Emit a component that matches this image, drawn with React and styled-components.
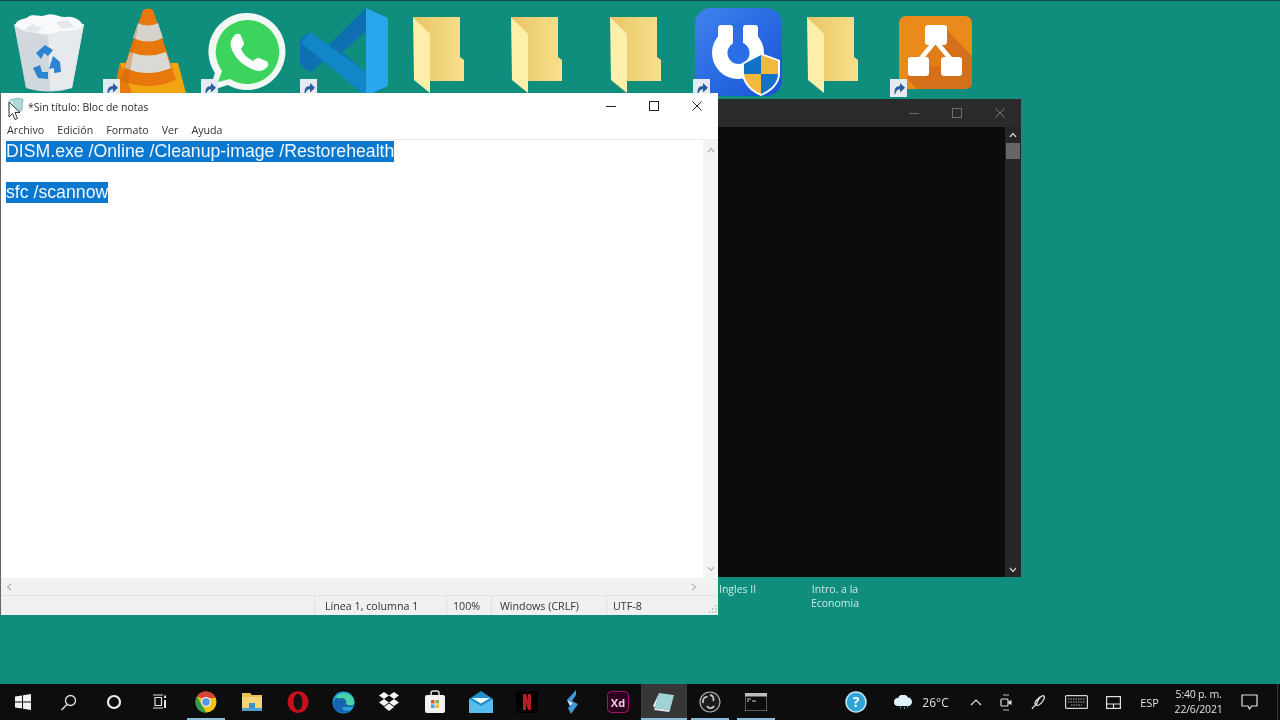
import React from 'react';
import styled, { createGlobalStyle } from 'styled-components';

const GlobalStyle = createGlobalStyle`
  html, body { margin: 0; padding: 0; background: #0f8e7e; }
  body { width: 1280px; height: 720px; overflow: hidden; font-family: "Open Sans", "Noto Sans", sans-serif; }
  #root { filter: blur(0.35px); }
`;

const Screen = styled.div`
  width: 1280px;
  height: 720px;
  display: flex;
  flex-direction: column;
  background: #0f8e7e;
  border-top: 1px solid #0d4a44;
  box-sizing: border-box;
`;

const Desktop = styled.div`
  position: relative;
  flex: 1;
  overflow: hidden;
`;

const IconRow = styled.div`
  display: flex;
  align-items: flex-start;
`;

const DeskIcon = styled.div`
  position: relative;
  flex: none;
  width: ${(p) => p.$w}px;
  height: ${(p) => p.$h}px;
  margin-left: ${(p) => p.$gap}px;
  margin-top: ${(p) => p.$top}px;
  svg { display: block; }
`;

const ShortcutBadge = styled.div`
  position: absolute;
  left: ${(p) => p.$x}px;
  top: ${(p) => p.$y}px;
  width: 17px;
  height: 18px;
  background: #e4ebf0;
  display: flex;
  align-items: center;
  justify-content: center;
`;

const DeskLabel = styled.div`
  position: absolute;
  left: ${(p) => p.$x}px;
  top: 581px;
  width: ${(p) => p.$w}px;
  color: #cfe9e5;
  font-size: 10.5px;
  line-height: 14px;
  text-align: ${(p) => p.$align};
`;

const ConsoleWindow = styled.div`
  position: absolute;
  left: 700px;
  top: 98px;
  width: 321px;
  height: 478px;
  display: flex;
  flex-direction: column;
  background: #0c0c0c;
`;

const ConsoleTitle = styled.div`
  height: 28px;
  flex: none;
  background: #2b2b2b;
  display: flex;
  justify-content: flex-end;
  align-items: center;
`;

const ConsoleBody = styled.div`
  flex: 1;
  display: flex;
  justify-content: flex-end;
`;

const ConsoleScroll = styled.div`
  width: 16px;
  background: #262626;
  display: flex;
  flex-direction: column;
  align-items: center;
  justify-content: space-between;
  padding: 4px 0 3px;
  box-sizing: border-box;
  position: relative;
`;

const ConsoleThumb = styled.div`
  position: absolute;
  top: 16px;
  left: 1px;
  width: 14px;
  height: 16px;
  background: #666;
`;

const WinButton = styled.div`
  width: 43px;
  flex: none;
  height: 100%;
  display: flex;
  align-items: center;
  justify-content: center;
`;

const Notepad = styled.div`
  position: absolute;
  left: 0;
  top: 92px;
  width: 718px;
  height: 522px;
  display: flex;
  flex-direction: column;
  background: #fff;
  border-left: 1px solid #666;
  box-sizing: border-box;
  color: #222;
`;

const TitleBar = styled.div`
  height: 25px;
  flex: none;
  display: flex;
  align-items: center;
  padding-left: 6px;
  font-size: 10.5px;
`;

const TitleText = styled.span`
  flex: 1;
  margin: 2px 0 0 4px;
  color: #2a2a2a;
`;

const MenuBar = styled.div`
  height: 22px;
  flex: none;
  display: flex;
  align-items: center;
  gap: 13px;
  padding: 2px 0 0 6px;
  box-sizing: border-box;
  font-size: 10.7px;
  color: #333;
  border-bottom: 1px solid #eee;
`;

const EditorRow = styled.div`
  flex: 1;
  display: flex;
  min-height: 0;
`;

const Editor = styled.div`
  flex: 1;
  padding: 1px 0 0 5px;
  font-family: "Liberation Sans", Arial, sans-serif;
  font-size: 17.7px;
  line-height: 20.6px;
  color: #f2f8fd;
`;

const Line = styled.div`
  height: 20.6px;
`;

const Selected = styled.span`
  background: #0b78cf;
  display: inline-block;
  height: 20.6px;
`;

const VScroll = styled.div`
  width: 15px;
  flex: none;
  background: #f4f4f4;
  display: flex;
  flex-direction: column;
  justify-content: space-between;
  align-items: center;
  padding: 6px 0 5px;
  box-sizing: border-box;
`;

const HScroll = styled.div`
  height: 17px;
  flex: none;
  background: #f1f1f1;
  display: flex;
  justify-content: space-between;
  align-items: center;
  padding: 0 20px 0 4px;
`;

const StatusBar = styled.div`
  position: relative;
  height: 19px;
  flex: none;
  background: #f0f0f0;
  border-top: 1px solid #e2e2e2;
  display: flex;
  font-size: 10.7px;
  color: #333;
  padding-left: 313px;
`;

const StatusCell = styled.div`
  width: ${(p) => p.$w}px;
  padding-left: ${(p) => p.$pad}px;
  box-sizing: border-box;
  border-left: 1px solid #e0e0e0;
  display: flex;
  align-items: center;
`;

const Grip = styled.svg`
  position: absolute;
  right: 1px;
  bottom: 1px;
`;

const Taskbar = styled.div`
  height: 36px;
  flex: none;
  background: #0d0d0d;
  display: flex;
  align-items: stretch;
  color: #e0e0e0;
`;

const TaskButton = styled.div`
  position: relative;
  width: 45.8px;
  flex: none;
  display: flex;
  align-items: center;
  justify-content: center;
  background: ${(p) => (p.$active ? '#363636' : 'transparent')};
  &::after {
    content: '';
    display: ${(p) => (p.$open ? 'block' : 'none')};
    position: absolute;
    left: 4px;
    right: 4px;
    bottom: 0;
    height: 2px;
    background: #8cbcd8;
  }
  ${(p) => p.$active && '&::after { left: 0; right: 0; }'}
`;

const Tray = styled.div`
  flex: 1;
  display: flex;
  align-items: center;
  position: relative;
  font-size: 11px;
  border-right: 1px solid #3a3a3a;
  margin-right: 2px;
`;

const TraySlot = styled.div`
  flex: none;
  width: ${(p) => p.$w}px;
  margin-left: ${(p) => p.$gap || 0}px;
  display: flex;
  align-items: center;
  justify-content: center;
  font-size: ${(p) => p.$size || 11}px;
`;

const Clock = styled.div`
  flex: none;
  width: 60px;
  margin-left: 8px;
  text-align: center;
  font-size: 10.5px;
  line-height: 15px;
  letter-spacing: -0.2px;
`;

const Badge = () => (
  <svg width="14" height="15" viewBox="0 0 14 15">
    <path d="M3 14C1.500 8 4 5 8 5V2l5 4.800L8 11.500V8C5.500 8 4 10 3 14Z" fill="#2c5c9e" />
  </svg>
);

const RecycleBin = () => (
  <svg width="70" height="80" viewBox="0 0 70 80">
    <path d="M0 12L70 12 58 76Q36 83 12 76Z" fill="#d9dfe3" />
    <path d="M34 18L70 12 58 76 36 79Z" fill="#e6eaed" />
    <path d="M1 13C4 6 10 8 14 5 20 1 26 6 32 3 40 0 46 6 52 5 60 4 66 8 69 13 62 22 48 17 40 21 30 25 22 19 14 20 8 20 4 17 1 13Z" fill="#f8f9fa" />
    <path d="M10 18L18 12 28 16 22 22Z" fill="#e3e7ea" />
    <path d="M42 10L54 8 60 15 48 17Z" fill="#e3e7ea" />
    <path d="M1 14L14 20 34 24 36 79 12 76Z" fill="#c9d2d8" opacity=".55" />
    <g fill="#2a84d2">
      <path d="M22 41L31 33 39 38 34 44 30 41 27 47Z" />
      <path d="M39 44L46 50 47 60 40 61 40 56 35 57Z" />
      <path d="M34 67L24 66 19 56 26 53 28 60 34 60Z" />
    </g>
  </svg>
);

const VlcCone = () => (
  <svg width="76" height="85" viewBox="0 0 76 85">
    <path d="M10 55L4 85H76L68 55Z" fill="#f2a411" />
    <path d="M10 55L4 85H22L14 64Z" fill="#e67c0e" />
    <path d="M33 2Q38 -1 43 2L66 72Q38 84 10 72Z" fill="#e8780c" />
    <path d="M28 15Q38 20 48 15L53 30Q38 37 23 30Z" fill="#d6d3cd" />
    <path d="M20 44Q38 51 56 44L61 60Q38 70 15 60Z" fill="#dbd9d4" />
    <path d="M30 6L26 22 20 44 16 60 10 72Q14 74 18 76Z" fill="#c9620a" opacity=".35" />
  </svg>
);

const Whatsapp = () => (
  <svg width="80" height="80" viewBox="0 0 80 80">
    <path d="M40 1a38.500 38.500 0 1 1-19 72L2 79l6-18A38.500 38.500 0 0 1 40 1Z" fill="#f3f7f3" />
    <path d="M40 8a32 32 0 1 1-17 59L11 70l4-11A32 32 0 0 1 40 8Z" fill="#3dd45e" />
    <path d="M27 24c2-3 6-3 7 0l3 7c.5 2-2 4-3 6 2 5 6 9 12 12 2-1 4-4 6-3l7 3c3 1 3 5 0 7-5 5-12 3-20-2-8-5-13-12-15-19-1-4 0-8 3-11Z" fill="#fff" />
  </svg>
);

const VsCode = () => (
  <svg width="90" height="88" viewBox="0 0 90 88">
    <path d="M66 0L88 10V78L66 88 28 50 10 64 0 57V31L10 24 28 38Z M66 24L42 44 66 64Z" fill="#0e70b0" fillRule="evenodd" />
    <path d="M10 24L66 64V88L1 35Z" fill="#1187ca" />
    <path d="M66 0L88 10V78L66 88Z" fill="#29a6ec" />
  </svg>
);

const Folder = () => (
  <svg width="53" height="76" viewBox="0 0 53 76">
    <defs>
      <linearGradient id="fold" x1="0" x2="1" y1="0" y2="0">
        <stop offset="0" stopColor="#e8c563" />
        <stop offset="1" stopColor="#f9e08c" />
      </linearGradient>
    </defs>
    <path d="M0 0H47V40L51 43V64H16V18Z" fill="url(#fold)" />
    <path d="M0 0L17 17V76L1 63Z" fill="#fdeeaa" />
  </svg>
);

const ShieldApp = () => (
  <svg width="88" height="88" viewBox="0 0 88 88">
    <defs>
      <linearGradient id="blueApp" x1="0" y1="0" x2="1" y2="1">
        <stop offset="0" stopColor="#3f82ee" />
        <stop offset="1" stopColor="#1554d6" />
      </linearGradient>
    </defs>
    <rect x="0" y="0" width="87" height="88" rx="16" fill="url(#blueApp)" />
    <circle cx="43" cy="45" r="26" fill="#fff" />
    <path d="M23 20Q23 17 26 17H35Q38 17 38 20V34H23Z" fill="#fff" />
    <path d="M48 20Q48 17 51 17H60Q63 17 63 20V34H48Z" fill="#fff" />
    <path d="M38 15H48V38H38Z" fill="#2c6ee6" />
    <path d="M23 15H38V24H23Z" fill="none" />
    <circle cx="43.500" cy="45" r="11" fill="#2c6ee6" />
    <path d="M47 55L66 45 85 52V66C85 76 76 84 66 88 56 84 48 76 47 66Z" fill="#fff" />
    <path d="M49 56L66 47V66H49Z" fill="#1272c6" />
    <path d="M66 47L83 53V66H66Z" fill="#f3b93f" />
    <path d="M49 66H66V86C57 82 50 75 49 66Z" fill="#f3b93f" />
    <path d="M66 66H83C83 75 75 82 66 86Z" fill="#1272c6" />
  </svg>
);

const DrawioApp = () => (
  <svg width="73" height="73" viewBox="0 0 73 73">
    <rect width="73" height="73" rx="7" fill="#e98a1b" />
    <path d="M48 14L73 40V66Q73 73 66 73H18L8 62 30 30Z" fill="#d4701a" />
    <path d="M37 20L15 50H58Z" fill="#e98a1b" opacity=".5" />
    <path d="M34 28L18 47M39 28L55 47" stroke="#fff" strokeWidth="4.500" />
    <rect x="26" y="9" width="22" height="20" rx="3" fill="#fff" />
    <rect x="9" y="41" width="21" height="19" rx="3" fill="#fff" />
    <rect x="42" y="41" width="21" height="19" rx="3" fill="#fff" />
  </svg>
);

const NotepadIcon = () => (
  <svg width="17" height="17" viewBox="0 0 16 16">
    <path d="M2 3L10 1 15 2 14 13 6 15 2 13Z" fill="#a9d9dc" stroke="#7a9aa0" strokeWidth=".6" />
    <path d="M2 3L6 5V15L2 13Z" fill="#d7eef0" />
  </svg>
);

const Pointer = styled.svg`
  position: absolute;
  left: 7px;
  top: 8px;
`;

const MinGlyph = ({ c, w = 1 }) => (
  <svg width="12" height="12" viewBox="0 0 12 12"><path d="M1 6.500H11" stroke={c} strokeWidth={w} /></svg>
);
const MaxGlyph = ({ c }) => (
  <svg width="12" height="12" viewBox="0 0 12 12"><rect x="1.500" y="1.500" width="9" height="9" fill="none" stroke={c} strokeWidth="1" /></svg>
);
const CloseGlyph = ({ c }) => (
  <svg width="12" height="12" viewBox="0 0 12 12"><path d="M1.500 1.500L10.500 10.500M10.500 1.500L1.500 10.500" stroke={c} strokeWidth="1" /></svg>
);
const Arrow = ({ d, c = '#b5b5b5' }) => (
  <svg width="8" height="8" viewBox="0 0 8 8"><path d={d} fill="none" stroke={c} strokeWidth="1.200" /></svg>
);

const TASK_ICONS = [
  { key: 'win', el: <svg width="16" height="16" viewBox="0 0 16 16"><path d="M0 2.500L7 1.500V7.500H0ZM8 1.300L16 0V7.500H8ZM0 8.500H7V14.500L0 13.500ZM8 8.500H16V16L8 14.700Z" fill="#f2f2f2" /></svg> },
  { key: 'search', el: <svg width="17" height="17" viewBox="0 0 17 17"><circle cx="10.500" cy="6.500" r="5" fill="none" stroke="#e0e0e0" strokeWidth="1.300" /><path d="M7 10.500L1.500 16" stroke="#e0e0e0" strokeWidth="1.400" /></svg> },
  { key: 'cortana', el: <svg width="16" height="16" viewBox="0 0 16 16"><circle cx="8" cy="8" r="6" fill="none" stroke="#eee" strokeWidth="2.200" /></svg> },
  { key: 'view', el: <svg width="16" height="16" viewBox="0 0 16 16"><path d="M3 3.500H9.500V11.500H3ZM1 1H11M1 14H11" fill="none" stroke="#e0e0e0" strokeWidth="1.200" /><path d="M13 1.500V4M13 6V14" stroke="#e0e0e0" strokeWidth="2" /></svg> },
  { key: 'chrome', open: true, el: <svg width="22" height="22" viewBox="0 0 22 22"><circle cx="11" cy="11" r="10.500" fill="#f0c419" /><path d="M11 .5A10.500 10.500 0 0 1 20.500 7H11Z M2 5.500A10.500 10.500 0 0 1 11 .5V7H6Z" fill="#d9443a" /><path d="M2 5.500L7 14 11 21.500A10.500 10.500 0 0 1 2 5.500Z" fill="#2f9e4f" /><circle cx="11" cy="11" r="5" fill="#f4f4f4" /><circle cx="11" cy="11" r="3.800" fill="#5a94ea" /></svg> },
  { key: 'explorer', el: <svg width="22" height="20" viewBox="0 0 22 20"><path d="M1 1H9L11 3H21V19H1Z" fill="#e9bf4f" /><path d="M1 5H21V19H1Z" fill="#f4d679" /><path d="M8 11H14V16H8Z" fill="#3a8fc4" /><path d="M1 16H21V19H1Z" fill="#4da0cf" /></svg> },
  { key: 'opera', el: <svg width="22" height="22" viewBox="0 0 22 22"><ellipse cx="11" cy="11" rx="10.500" ry="10.800" fill="#c8101c" /><ellipse cx="11" cy="11" rx="4.500" ry="8.200" fill="#121212" /></svg> },
  { key: 'edge', el: <svg width="23" height="23" viewBox="0 0 23 23"><circle cx="11.500" cy="11.500" r="11" fill="#2aa0d8" /><path d="M1 13C2 5 12 2 18 6c4 3 5 7 4 10H10c0 3 4 5 9 3-2 2-5 3.500-8 3C5 21 0 17 1 13Z" fill="#1565b0" /><path d="M4 6C8 1 17 1 21 7c2 3 1.500 6 0 7-2 1-6 0-7-1 1-3-1-6-4-6-2 0-4 1-6-1Z" fill="#46d4a4" /></svg> },
  { key: 'dropbox', el: <svg width="22" height="20" viewBox="0 0 22 20"><path d="M6 0L11 3.500 6 7 1 3.500ZM16 0L21 3.500 16 7 11 3.500ZM6 7L11 10.500 6 14 1 10.500ZM16 7L21 10.500 16 14 11 10.500ZM6 15L11 11.500 16 15 11 19Z" fill="#f2f2f2" /></svg> },
  { key: 'store', el: <svg width="22" height="24" viewBox="0 0 22 24"><path d="M7 6V3Q7 1 9 1H13Q15 1 15 3V6" fill="none" stroke="#e0e0e0" strokeWidth="1.500" /><rect x="1" y="5" width="20" height="18" rx="2" fill="#f1f1f1" /><rect x="7" y="10" width="3.500" height="3.500" fill="#e2562f" /><rect x="11.500" y="10" width="3.500" height="3.500" fill="#7eba3a" /><rect x="7" y="14.500" width="3.500" height="3.500" fill="#36a4e6" /><rect x="11.500" y="14.500" width="3.500" height="3.500" fill="#f4b62c" /></svg> },
  { key: 'mail', el: <svg width="24" height="22" viewBox="0 0 24 22"><path d="M0 8L12 0 24 8V22H0Z" fill="#1f8fd0" /><path d="M0 8L12 15 24 8V22H0Z" fill="#58bdea" /><path d="M3 7H21L12 12.500Z" fill="#f3f8fb" /></svg> },
  { key: 'netflix', el: <svg width="22" height="22" viewBox="0 0 22 22"><rect width="22" height="22" fill="#000" /><path d="M7 3H10L15 19H12ZM7 3H10V19L7 19ZM12 3H15V19H12Z" fill="#b81d24" /></svg> },
  { key: 'bolt', el: <svg width="14" height="24" viewBox="0 0 14 24"><path d="M11 0L2 10 8 13 3 18 6 24 13 14 7 11 11 5Z" fill="#3d9bdc" /><path d="M2 10L8 13 5 16Z" fill="#d5eefc" /></svg> },
  { key: 'xd', el: <svg width="22" height="22" viewBox="0 0 22 22"><rect x=".5" y=".5" width="21" height="21" rx="4" fill="#2e001f" stroke="#a81570" /><text x="11" y="15.500" textAnchor="middle" fontFamily="Open Sans, sans-serif" fontSize="11" fontWeight="700" fill="#f5c8e8">Xd</text></svg> },
  { key: 'notepad', open: true, active: true, el: <svg width="22" height="20" viewBox="0 0 22 20"><path d="M6 1L21 3 17 18 2 16Z" fill="#9fd4d4" /><path d="M6 1L2 16 0 14Z" fill="#e6f4f4" /><path d="M2 16L17 18 16 20 1 18Z" fill="#dfe8e8" /></svg> },
  { key: 'obs', open: true, el: <svg width="22" height="22" viewBox="0 0 22 22"><circle cx="11" cy="11" r="10" fill="#1c1c1c" stroke="#b5b5b5" strokeWidth="1.200" /><path d="M11 4a4 4 0 0 1 3 6M15 15a4 4 0 0 1-7 0M4.500 12a4 4 0 0 1 4-6" fill="none" stroke="#c4c4c4" strokeWidth="1.800" /></svg> },
  { key: 'cmd', open: true, el: <svg width="22" height="18" viewBox="0 0 22 18"><rect width="22" height="18" fill="#0c0c0c" stroke="#a5a5a5" /><rect width="22" height="3.500" fill="#bdbdbd" /><path d="M2 6H6M2 8H4M7 8H11" stroke="#ccc" strokeWidth="1.200" /></svg> },
];

const FOLDER_TOP = 16;

function App() {
  return (
    <Screen>
      <GlobalStyle />
      <Desktop>
        <IconRow>
          <DeskIcon $w={70} $h={80} $gap={14} $top={11}><RecycleBin /></DeskIcon>
          <DeskIcon $w={76} $h={85} $gap={26} $top={7}>
            <VlcCone />
            <ShortcutBadge $x={-7} $y={71}><Badge /></ShortcutBadge>
          </DeskIcon>
          <DeskIcon $w={80} $h={80} $gap={21} $top={11}>
            <Whatsapp />
            <ShortcutBadge $x={-6} $y={67}><Badge /></ShortcutBadge>
          </DeskIcon>
          <DeskIcon $w={90} $h={88} $gap={13} $top={7}>
            <VsCode />
            <ShortcutBadge $x={0} $y={71}><Badge /></ShortcutBadge>
          </DeskIcon>
          <DeskIcon $w={53} $h={76} $gap={23} $top={FOLDER_TOP}><Folder /></DeskIcon>
          <DeskIcon $w={53} $h={76} $gap={45} $top={FOLDER_TOP}><Folder /></DeskIcon>
          <DeskIcon $w={53} $h={76} $gap={46} $top={FOLDER_TOP}><Folder /></DeskIcon>
          <DeskIcon $w={88} $h={88} $gap={32} $top={7}>
            <ShieldApp />
            <ShortcutBadge $x={-2} $y={71}><Badge /></ShortcutBadge>
          </DeskIcon>
          <DeskIcon $w={53} $h={76} $gap={24} $top={FOLDER_TOP}><Folder /></DeskIcon>
          <DeskIcon $w={73} $h={73} $gap={39} $top={15}>
            <DrawioApp />
            <ShortcutBadge $x={-9} $y={63}><Badge /></ShortcutBadge>
          </DeskIcon>
        </IconRow>

        <DeskLabel $x={719} $w={60} $align="left">Ingles II</DeskLabel>
        <DeskLabel $x={800} $w={70} $align="center">Intro. a la<br />Economia</DeskLabel>

        <ConsoleWindow>
          <ConsoleTitle>
            <WinButton><MinGlyph c="#6e6e6e" /></WinButton>
            <WinButton><MaxGlyph c="#6e6e6e" /></WinButton>
            <WinButton><CloseGlyph c="#7a7a7a" /></WinButton>
          </ConsoleTitle>
          <ConsoleBody>
            <ConsoleScroll>
              <Arrow d="M1 6L4 2.500 7 6" c="#cfcfcf" />
              <ConsoleThumb />
              <Arrow d="M1 2L4 5.500 7 2" c="#cfcfcf" />
            </ConsoleScroll>
          </ConsoleBody>
        </ConsoleWindow>

        <Notepad>
          <TitleBar>
            <NotepadIcon />
            <TitleText>*Sin título: Bloc de notas</TitleText>
            <WinButton><MinGlyph c="#222" /></WinButton>
            <WinButton><MaxGlyph c="#222" /></WinButton>
            <WinButton><CloseGlyph c="#222" /></WinButton>
          </TitleBar>
          <MenuBar>
            <span>Archivo</span>
            <span>Edición</span>
            <span>Formato</span>
            <span>Ver</span>
            <span>Ayuda</span>
          </MenuBar>
          <EditorRow>
            <Editor>
              <Line><Selected>DISM.exe /Online /Cleanup-image /Restorehealth</Selected></Line>
              <Line />
              <Line><Selected>sfc /scannow</Selected></Line>
            </Editor>
            <VScroll>
              <Arrow d="M1 6L4 2.500 7 6" />
              <Arrow d="M1 2L4 5.500 7 2" />
            </VScroll>
          </EditorRow>
          <HScroll>
            <Arrow d="M6 1L2.500 4 6 7" />
            <Arrow d="M2 1L5.500 4 2 7" />
          </HScroll>
          <StatusBar>
            <StatusCell $w={132} $pad={10}>Línea 1, columna 1</StatusCell>
            <StatusCell $w={45} $pad={6}>100%</StatusCell>
            <StatusCell $w={115} $pad={8}>Windows (CRLF)</StatusCell>
            <StatusCell $w={110} $pad={6}>UTF-8</StatusCell>
            <Grip width="10" height="10" viewBox="0 0 10 10">
              <path d="M8 2H9.500M5 5H6.500M8 5H9.500M2 8H3.500M5 8H6.500M8 8H9.500" stroke="#b9b9b9" strokeWidth="1.500" />
            </Grip>
          </StatusBar>
          <Pointer width="14" height="20" viewBox="0 0 14 20">
            <path d="M1 1V16L4.500 12.500 7 18.500 9.500 17.500 7 11.500H12Z" fill="#fff" stroke="#333" strokeWidth="1" />
          </Pointer>
        </Notepad>
      </Desktop>

      <Taskbar>
        {TASK_ICONS.map((t) => (
          <TaskButton key={t.key} $open={t.open} $active={t.active}>{t.el}</TaskButton>
        ))}
        <Tray>
          <TraySlot $w={24} $gap={65}>
            <svg width="22" height="22" viewBox="0 0 22 22">
              <circle cx="11" cy="11" r="10" fill="#2ea3d6" stroke="#bfe7f5" strokeWidth="1.500" />
              <text x="11" y="16" textAnchor="middle" fontFamily="Open Sans, sans-serif" fontSize="14" fontWeight="700" fill="#fff">?</text>
            </svg>
          </TraySlot>
          <TraySlot $w={22} $gap={25}>
            <svg width="21" height="14" viewBox="0 0 21 14">
              <path d="M5 11a4 4 0 0 1 0-8 5.500 5.500 0 0 1 10-.5 4.500 4.500 0 0 1 1.500 8.500Z" fill="#dff1fb" />
              <path d="M7 12.500h1M11 13h1M14 12h1" stroke="#5fb3e3" strokeWidth="1.500" />
            </svg>
          </TraySlot>
          <TraySlot $w={32} $gap={5} $size={12}>26°C</TraySlot>
          <TraySlot $w={14} $gap={17}>
            <svg width="12" height="8" viewBox="0 0 12 8"><path d="M1 7L6 2 11 7" fill="none" stroke="#e0e0e0" strokeWidth="1.200" /></svg>
          </TraySlot>
          <TraySlot $w={14} $gap={16}>
            <svg width="12" height="17" viewBox="0 0 12 17">
              <path d="M3 1H9M3 16H9" stroke="#bbb" strokeWidth="1" />
              <rect x="1" y="5" width="7" height="7" rx="1" fill="none" stroke="#e0e0e0" strokeWidth="1.200" />
              <path d="M8.500 7.500L11.500 6V11L8.500 9.500Z" fill="#e0e0e0" />
            </svg>
          </TraySlot>
          <TraySlot $w={16} $gap={18}>
            <svg width="16" height="16" viewBox="0 0 16 16">
              <path d="M1 15C3 11 5 12 6 9S9 3 11 2s3 1 2 3-3 5-5 6-4 0-4-2 3-4 5-6" fill="none" stroke="#e0e0e0" strokeWidth="1.300" />
            </svg>
          </TraySlot>
          <TraySlot $w={24} $gap={18}>
            <svg width="23" height="14" viewBox="0 0 23 14">
              <rect x=".6" y=".6" width="21.800" height="12.800" rx="1" fill="none" stroke="#d4d4d4" strokeWidth="1.200" />
              <path d="M3 4H20M3 7H20M6 10H17" stroke="#b5b5b5" strokeWidth="1.200" strokeDasharray="1.500 1" />
            </svg>
          </TraySlot>
          <TraySlot $w={16} $gap={17}>
            <svg width="15" height="13" viewBox="0 0 15 13">
              <rect x=".6" y=".6" width="13.800" height="11.800" fill="none" stroke="#e0e0e0" strokeWidth="1.200" />
              <path d="M1 8H14M7.500 8V12" stroke="#e0e0e0" strokeWidth="1.200" />
            </svg>
          </TraySlot>
          <TraySlot $w={22} $gap={17}>ESP</TraySlot>
          <Clock>5:40 p. m.<br />22/6/2021</Clock>
          <TraySlot $w={18} $gap={12}>
            <svg width="17" height="16" viewBox="0 0 17 16">
              <path d="M1 1H16V12H10.500L8.500 15 7 12H1Z" fill="none" stroke="#e0e0e0" strokeWidth="1.200" />
            </svg>
          </TraySlot>
        </Tray>
      </Taskbar>
    </Screen>
  );
}

export default App;
